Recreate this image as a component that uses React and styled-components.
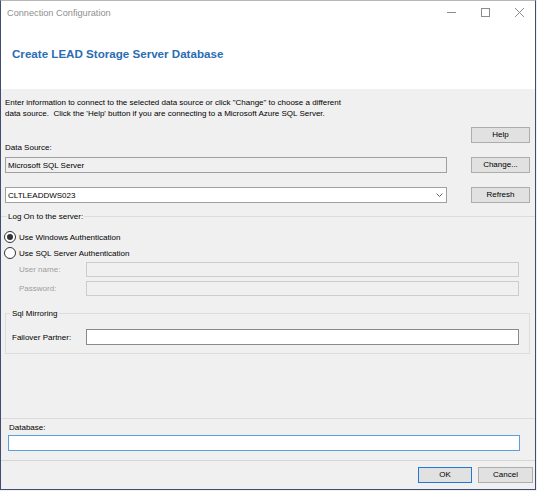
import React from "react";
import styled, { createGlobalStyle } from "styled-components";

const GlobalStyle = createGlobalStyle`
  body {
    margin: 0;
    background: #f0f0f0;
    font-family: "Liberation Sans", Arial, sans-serif;
  }
`;

const Window = styled.div`
  width: 536px;
  height: 490px;
  box-sizing: border-box;
  border: 1px solid #404d70;
  border-top-color: #b8b8b8;
  background: #f0f0f0;
  display: flex;
  flex-direction: column;
  font-size: 8px;
  color: #000;
  overflow: hidden;
`;

const TitleBar = styled.div`
  height: 23px;
  flex: none;
  background: #fff;
  display: flex;
  align-items: center;
  justify-content: space-between;
  padding-left: 6px;
`;

const TitleText = styled.span`
  font-size: 9.2px;
  color: #8f8f8f;
`;

const Controls = styled.div`
  display: flex;
  align-items: center;
  gap: 25px;
  padding-right: 11px;
`;

const Header = styled.div`
  height: 65px;
  flex: none;
  background: #fff;
  box-sizing: border-box;
  padding: 23px 0 0 11px;
`;

const Heading = styled.h1`
  margin: 0;
  font-size: 11.6px;
  line-height: 14px;
  font-weight: bold;
  color: #2a6db3;
`;

const Desc = styled.p`
  margin: 0;
  padding: 8px 0 0 4px;
  line-height: 11px;
`;

const SourceGrid = styled.div`
  margin-top: 8px;
  padding-left: 4px;
  display: grid;
  grid-template-columns: 442px 59px;
  grid-template-rows: 30px 30px 16px;
  column-gap: 24px;
`;

const Label = styled.span`
  line-height: 11px;
  color: ${(p) => (p.$disabled ? "#9d9d9d" : "#000")};
  align-self: ${(p) => (p.$bottom ? "end" : "auto")};
  margin-bottom: ${(p) => (p.$bottom ? "4px" : "0")};
  padding-left: ${(p) => p.$pl || 0}px;
`;

const Field = styled.div`
  height: ${(p) => p.$h || 16}px;
  box-sizing: border-box;
  border: 1px solid ${(p) => p.$border || "#a0a0a0"};
  background: ${(p) => p.$bg || "#fff"};
  display: flex;
  align-items: center;
  justify-content: space-between;
  padding: 0 3px 0 2px;
  width: ${(p) => (p.$w ? `${p.$w}px` : "auto")};
`;

const Button = styled.button`
  height: 16px;
  width: ${(p) => p.$w || 59}px;
  box-sizing: border-box;
  border: 1px solid ${(p) => (p.$default ? "#1f7ad6" : "#adadad")};
  background: #e1e1e1;
  font-family: inherit;
  font-size: 8px;
  color: #000;
  padding: 0;
  line-height: 14px;
  align-self: start;
`;

const LogOnGroup = styled.fieldset`
  margin: 8px 0 0;
  padding: 0 0 64px;
  border: 0;
  border-top: 1px solid #dcdcdc;
  border-bottom: 1px solid #dcdcdc;
  min-width: 0;
`;

const Legend = styled.legend`
  margin-left: ${(p) => p.$offset}px;
  padding: 0 ${(p) => p.$pad}px;
  line-height: 11px;
  font-size: 8px;
`;

const RadioRow = styled.label`
  height: 16px;
  display: flex;
  align-items: center;
  gap: 3px;
  padding-left: 3px;
  margin-top: ${(p) => p.$mt || 0}px;
`;

const RadioCircle = styled.span`
  width: 12px;
  height: 12px;
  box-sizing: border-box;
  border-radius: 50%;
  border: 1px solid #333;
  background: #fff;
  display: flex;
  align-items: center;
  justify-content: center;
  &::after {
    content: "";
    width: 6px;
    height: 6px;
    border-radius: 50%;
    background: ${(p) => (p.$checked ? "#333" : "transparent")};
  }
`;

const FormRow = styled.div`
  display: grid;
  grid-template-columns: ${(p) => p.$label}px 433px;
  align-items: center;
  padding-left: ${(p) => p.$pl}px;
  margin-top: ${(p) => p.$mt}px;
`;

const SqlGroup = styled.fieldset`
  margin: 12px 5px 0 4px;
  padding: 0 6px 8px;
  border: 1px solid #dcdcdc;
  min-width: 0;
`;

const DbPanel = styled.div`
  height: 41px;
  flex: none;
  box-sizing: border-box;
  padding: 3px 0 0 7px;
  display: flex;
  flex-direction: column;
  align-items: flex-start;
  gap: 2px;
`;

const Footer = styled.div`
  flex: 1;
  border-top: 1px solid #d6d6d6;
  display: flex;
  justify-content: flex-end;
  gap: 6px;
  padding: 6px 2px 0 0;
`;

const Chevron = () => (
  <svg width="7" height="4" viewBox="0 0 7 4">
    <polyline points="0.5,0.5 3.5,3.5 6.5,0.5" fill="none" stroke="#606060" strokeWidth="1" />
  </svg>
);

const CaptionIcon = ({ kind }) => (
  <svg width="9" height="9" viewBox="0 0 9 9" fill="none" stroke="#8c8c8c" strokeWidth="1">
    {kind === "min" && <line x1="0" y1="4.5" x2="9" y2="4.5" />}
    {kind === "max" && <rect x="0.5" y="0.5" width="8" height="8" />}
    {kind === "close" && (
      <>
        <line x1="0" y1="0" x2="9" y2="9" />
        <line x1="9" y1="0" x2="0" y2="9" />
      </>
    )}
  </svg>
);

export default function App() {
  return (
    <>
      <GlobalStyle />
      <Window>
        <TitleBar>
          <TitleText>Connection Configuration</TitleText>
          <Controls>
            <CaptionIcon kind="min" />
            <CaptionIcon kind="max" />
            <CaptionIcon kind="close" />
          </Controls>
        </TitleBar>
        <Header>
          <Heading>Create LEAD Storage Server Database</Heading>
        </Header>

        <Desc>
          Enter information to connect to the selected data source or click "Change" to choose a different
          <br />
          data source.&nbsp; Click the 'Help' button if you are connecting to a Microsoft Azure SQL Server.
        </Desc>

        <SourceGrid>
          <Label $bottom>Data Source:</Label>
          <Button>Help</Button>
          <Field $bg="#f0f0f0">Microsoft SQL Server</Field>
          <Button>Change...</Button>
          <Field>
            CLTLEADDWS023
            <Chevron />
          </Field>
          <Button>Refresh</Button>
        </SourceGrid>

        <LogOnGroup>
          <Legend $offset={6} $pad={1}>Log On to the server:</Legend>
          <RadioRow $mt={7}>
            <RadioCircle $checked />
            Use Windows Authentication
          </RadioRow>
          <RadioRow>
            <RadioCircle />
            Use SQL Server Authentication
          </RadioRow>
          <FormRow $label={67} $pl={18} $mt={1}>
            <Label $disabled>User name:</Label>
            <Field $h={15} $bg="#f0f0f0" $border="#cccccc" />
          </FormRow>
          <FormRow $label={67} $pl={18} $mt={4}>
            <Label $disabled>Password:</Label>
            <Field $h={15} $bg="#f0f0f0" $border="#cccccc" />
          </FormRow>

          <SqlGroup>
            <Legend $offset={-2} $pad={2}>Sql Mirroring</Legend>
            <FormRow $label={74} $pl={0} $mt={10}>
              <Label>Failover Partner:</Label>
              <Field $border="#8a8a8a" />
            </FormRow>
          </SqlGroup>
        </LogOnGroup>

        <DbPanel>
          <Label $pl={1}>Database:</Label>
          <Field $w={512} $border="#5b9fe0" />
        </DbPanel>

        <Footer>
          <Button $w={54} $default>OK</Button>
          <Button $w={55}>Cancel</Button>
        </Footer>
      </Window>
    </>
  );
}
